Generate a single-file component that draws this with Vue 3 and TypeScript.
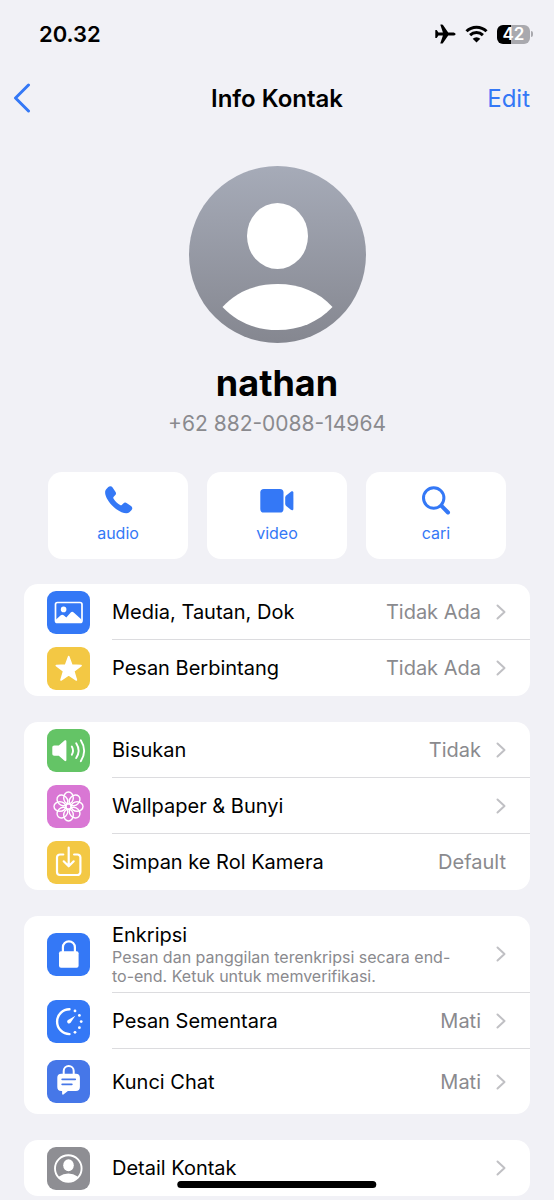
<script setup lang="ts">
type IconName =
  | 'media'
  | 'star'
  | 'speaker'
  | 'flower'
  | 'save'
  | 'lock'
  | 'timer'
  | 'chatlock'
  | 'person'

interface Row {
  icon: IconName
  tone: string
  title: string
  note?: string
  value?: string
  chevron: boolean
  size?: 'tall'
}

interface Action {
  icon: 'audio' | 'video' | 'search'
  label: string
}

const actions: Action[] = [
  { icon: 'audio', label: 'audio' },
  { icon: 'video', label: 'video' },
  { icon: 'search', label: 'cari' },
]

const groups: Row[][] = [
  [
    { icon: 'media', tone: 'blue', title: 'Media, Tautan, Dok', value: 'Tidak Ada', chevron: true },
    { icon: 'star', tone: 'yellow', title: 'Pesan Berbintang', value: 'Tidak Ada', chevron: true },
  ],
  [
    { icon: 'speaker', tone: 'green', title: 'Bisukan', value: 'Tidak', chevron: true },
    { icon: 'flower', tone: 'pink', title: 'Wallpaper & Bunyi', chevron: true },
    { icon: 'save', tone: 'yellow', title: 'Simpan ke Rol Kamera', value: 'Default', chevron: false },
  ],
  [
    {
      icon: 'lock',
      tone: 'blue',
      title: 'Enkripsi',
      note: 'Pesan dan panggilan terenkripsi secara end-to-end. Ketuk untuk memverifikasi.',
      chevron: true,
    },
    { icon: 'timer', tone: 'blue', title: 'Pesan Sementara', value: 'Mati', chevron: true },
    { icon: 'chatlock', tone: 'indigo', title: 'Kunci Chat', value: 'Mati', chevron: true, size: 'tall' },
  ],
  [{ icon: 'person', tone: 'gray', title: 'Detail Kontak', chevron: true }],
]

const petals = [0, 45, 90, 135, 180, 225, 270, 315]
</script>

<template>
  <div class="screen">
    <div class="status">
      <span class="time">20.32</span>
      <div class="indicators">
        <svg class="plane" viewBox="0 0 21 20" aria-hidden="true">
          <path d="M20.6 10c0 1-1.4 1.6-3 1.6h-4.4l-5.2 7.4c-.2.4-.5.6-.9.6H5.800c-.4 0-.5-.3-.4-.7l2.500-7.300H3.400l-1.500 2.100c-.2.3-.4.4-.8.4H.7c-.4 0-.5-.2-.4-.6L.3 10 .3 6.500c-.1-.4 0-.6.4-.6h.4c.4 0 .6.1.8.4l1.500 2.100h4.500L5.400 1.100c-.1-.4 0-.7.4-.7h1.300c.4 0 .7.2.9.6l5.200 7.400h4.400c1.600 0 3 .6 3 1.600z" />
        </svg>
        <svg class="wifi" viewBox="0 0 23 18" aria-hidden="true">
          <path d="M1.500 6.300a14.200 14.200 0 0 1 20 0M5.100 10.200a9.200 9.200 0 0 1 12.800 0" fill="none" stroke="#000" stroke-width="3" />
          <path d="M11.500 17.600 7.700 13.700a5.400 5.400 0 0 1 7.600 0z" />
        </svg>
        <span class="battery"><span class="level">42</span></span>
      </div>
    </div>

    <header class="nav">
      <button class="back" type="button" aria-label="Kembali">
        <svg viewBox="0 0 18 30" aria-hidden="true"><path d="M15.500 2 2.500 15l13 13" /></svg>
      </button>
      <h1>Info Kontak</h1>
      <button class="edit" type="button">Edit</button>
    </header>

    <main>
      <section class="profile">
        <svg class="avatar" viewBox="0 0 177 177" aria-hidden="true">
          <defs>
            <linearGradient id="avatar-fill" x1="0" y1="0" x2="0" y2="1">
              <stop offset="0" stop-color="#a6abb8" />
              <stop offset="1" stop-color="#858790" />
            </linearGradient>
          </defs>
          <circle cx="88.500" cy="88.500" r="88.500" fill="url(#avatar-fill)" />
          <ellipse cx="88.500" cy="70" rx="30.500" ry="33" fill="#fff" />
          <path d="M33.500 141C47 126 66 118 88.500 118s41.500 8 55 23c-14 15-33 23-55 23s-41-8-55-23z" fill="#fff" />
        </svg>
        <h2>nathan</h2>
        <p class="phone">+62 882-0088-14964</p>
      </section>

      <div class="actions">
        <button v-for="action in actions" :key="action.label" type="button" class="action">
          <svg viewBox="0 0 36 30" aria-hidden="true">
            <path
              v-if="action.icon === 'audio'"
              fill="currentColor"
              d="M6.200 4.200 8.300 2.100C9.600.9 11.500 1 12.600 2.500l2.800 4.200c.9 1.300.8 2.500-.3 3.600l-1.400 1.500c-.5.600-.6 1.100-.2 1.800 1.500 2.600 4 5 6.600 6.500.7.400 1.200.3 1.700-.2l1.500-1.400c1.100-1.100 2.300-1.200 3.600-.3l4.100 2.800c1.600 1.100 1.700 3 .4 4.300l-2 2C27 29.500 21.500 28 16 24 10.500 19.700 6.300 14 5.300 9.300 5 7.300 5 5.400 6.200 4.200z"
            />
            <template v-else-if="action.icon === 'video'">
              <rect x="1.300" y="4" width="23.200" height="23.500" rx="3.600" fill="currentColor" />
              <path fill="currentColor" d="M26.200 12.800c0-1 .3-1.700 1-2.400l4.700-3.700c1.200-.9 2.500-.5 2.500 1v16.100c0 1.500-1.300 1.900-2.500 1l-4.700-3.700c-.7-.7-1-1.400-1-2.400z" />
            </template>
            <g v-else fill="none" stroke="currentColor" stroke-linecap="round">
              <circle cx="15.700" cy="13" r="10.200" stroke-width="3" />
              <path d="m23.500 20.800 6.500 6.700" stroke-width="4" />
            </g>
          </svg>
          <span>{{ action.label }}</span>
        </button>
      </div>

      <ul v-for="(group, index) in groups" :key="index" class="card">
        <li v-for="row in group" :key="row.title">
          <button type="button" class="row" :class="row.size">
            <svg class="tile" :class="row.tone" viewBox="0 0 43 43" aria-hidden="true">
              <template v-if="row.icon === 'media'">
                <rect x="8.500" y="11.500" width="26.500" height="20" rx="2" fill="none" stroke="#fff" stroke-width="1.700" />
                <circle cx="16.600" cy="18.400" r="2.800" fill="#fff" />
                <path d="m9 28.500 4.800-4.200c.9-.8 2-.8 2.900 0l2.600 2.300 4.400-5c.9-1 2.100-1 3 0l7.800 6.800v3H9z" fill="#fff" />
              </template>
              <path
                v-else-if="row.icon === 'star'"
                fill="#fff"
                stroke="#fff"
                stroke-width="1.600"
                stroke-linejoin="round"
                d="m21.700 9.500 3.100 8.600 9.300.4-7.300 5.700 2.600 8.800-7.700-5.100-7.700 5.100 2.600-8.800-7.300-5.700 9.300-.4z"
              />
              <template v-else-if="row.icon === 'speaker'">
                <path fill="#fff" d="M7.300 16.500h4.500l5.700-4.900c.9-.8 1.900-.5 1.900.7v18.700c0 1.200-1 1.500-1.900.7L11.800 26.800H7.300c-1.300 0-2-.7-2-2v-6.300c0-1.300.7-2 2-2z" />
                <path d="M24.800 17.600c1.500 2.500 1.500 5.700 0 8.200M29.200 14.300c3 4.600 3 10.200 0 14.800M33.800 11.200c4.200 6.600 4.200 14.400 0 21" fill="none" stroke="#fff" stroke-width="1.900" stroke-linecap="round" />
              </template>
              <g v-else-if="row.icon === 'flower'" fill="none" stroke="#fff" stroke-width="1.400">
                <ellipse
                  v-for="angle in petals"
                  :key="angle"
                  cx="21.500"
                  cy="12.900"
                  rx="4.800"
                  ry="5.900"
                  :transform="`rotate(${angle} 21.5 21.5)`"
                />
                <circle cx="21.500" cy="21.500" r="2.600" />
              </g>
              <path
                v-else-if="row.icon === 'save'"
                fill="none"
                stroke="#fff"
                stroke-width="2.200"
                stroke-linecap="round"
                stroke-linejoin="round"
                d="M16.300 13.500h-3.300a3 3 0 0 0-3 3v14.500a3 3 0 0 0 3 3h17.400a3 3 0 0 0 3-3v-14.500a3 3 0 0 0-3-3h-3.300M21.700 6.500v18.800m-5-5 5 5 5-5"
              />
              <template v-else-if="row.icon === 'lock'">
                <path d="M15.900 19v-4.700a6 6 0 0 1 12 0V19" fill="none" stroke="#fff" stroke-width="2.200" />
                <rect x="12" y="18.200" width="19.600" height="16.600" rx="2" fill="#fff" />
              </template>
              <template v-else-if="row.icon === 'timer'">
                <path d="M22.500 9.300a12.400 12.400 0 0 0 0 24.800" fill="none" stroke="#fff" stroke-width="2.400" stroke-linecap="round" />
                <g fill="#fff">
                  <circle cx="28" cy="10.900" r="1.400" />
                  <circle cx="32.400" cy="15.400" r="1.400" />
                  <circle cx="34.200" cy="21.600" r="1.400" />
                  <circle cx="32.400" cy="27.700" r="1.400" />
                  <circle cx="28" cy="32.300" r="1.400" />
                  <path d="m28.300 15.800-7.300 4.200c-1.200 1-1 2.200-.3 2.900s2 .8 2.900-.2z" />
                </g>
              </template>
              <template v-else-if="row.icon === 'chatlock'">
                <path d="M16.700 14.500v-3.500a5 5 0 0 1 10 0v3.500" fill="none" stroke="#fff" stroke-width="2" />
                <path fill="#fff" d="M14.300 13.800h14.600c2.600 0 4 1.400 4 4v9.200c0 2.600-1.400 4-4 4h-8l-4.500 3.400c-.7.5-1.300.2-1.300-.6V31h-.8c-2.600 0-4-1.400-4-4v-9.200c0-2.600 1.400-4 4-4z" />
                <path d="M15.200 19.300h13M15.200 24.300h9.600" stroke="#4677e8" stroke-width="1.800" stroke-linecap="round" />
              </template>
              <template v-else>
                <clipPath id="person-clip"><circle cx="21.300" cy="21.500" r="13" /></clipPath>
                <circle cx="21.300" cy="21.500" r="13.300" fill="none" stroke="#fff" stroke-width="1.900" />
                <ellipse cx="21.500" cy="18.200" rx="5.300" ry="6" fill="#fff" />
                <ellipse cx="21.300" cy="35.500" rx="12.500" ry="9" fill="#fff" clip-path="url(#person-clip)" />
              </template>
            </svg>
            <span class="body">
              <span class="text" :class="{ noted: row.note }">
                <span class="title">{{ row.title }}</span>
                <span v-if="row.note" class="note">{{ row.note }}</span>
              </span>
              <span v-if="row.value" class="value">{{ row.value }}</span>
              <svg v-if="row.chevron" class="chevron" viewBox="0 0 10 16" aria-hidden="true">
                <path d="m1.500 1.500 7 6.500-7 6.500" />
              </svg>
            </span>
          </button>
        </li>
      </ul>
    </main>

    <div class="home-bar"></div>
  </div>
</template>

<style>
body {
  margin: 0;
  background: #f1f1f6;
}
</style>

<style scoped>
.screen {
  min-height: 100vh;
  box-sizing: border-box;
  padding-bottom: 4px;
  background: #f1f1f6;
  color: #000;
  font-family: Inter, "Liberation Sans", sans-serif;
  font-size: 20px;
}

button {
  margin: 0;
  padding: 0;
  border: 0;
  background: none;
  color: inherit;
  font: inherit;
  text-align: left;
  cursor: pointer;
}

svg {
  display: block;
  flex: none;
}

.status {
  display: flex;
  align-items: center;
  justify-content: space-between;
  height: 72px;
  box-sizing: border-box;
  padding: 0 21px 4px 39px;
}

.time {
  font-size: 22px;
  font-weight: 600;
}

.indicators {
  display: flex;
  align-items: center;
  gap: 9px;
}

.plane {
  width: 21px;
  height: 20px;
}

.wifi {
  width: 23px;
  height: 18px;
}

.battery {
  display: flex;
  align-items: center;
  gap: 1px;
}

.battery::after {
  content: "";
  width: 2px;
  height: 6px;
  border-radius: 0 2px 2px 0;
  background: #a9a9ae;
}

.level {
  width: 33px;
  height: 19px;
  border-radius: 6px;
  background: linear-gradient(90deg, #000 42%, #a9a9ae 42%);
  color: #fff;
  font-size: 17px;
  font-weight: 600;
  line-height: 19px;
  text-align: center;
}

.nav {
  display: grid;
  grid-template-columns: 1fr auto 1fr;
  align-items: center;
  height: 52px;
  padding: 0 24px 0 13px;
}

.nav h1 {
  margin: 0;
  padding-right: 11px;
  padding-left: 22px;
  font-size: 24px;
  font-weight: 600;
}

.back {
  justify-self: start;
  color: #3478f6;
}

.back svg {
  width: 18px;
  height: 30px;
}

.back path {
  fill: none;
  stroke: currentColor;
  stroke-width: 3;
  stroke-linecap: round;
  stroke-linejoin: round;
}

.edit {
  justify-self: end;
  color: #3478f6;
  font-size: 24px;
}

.profile {
  display: flex;
  flex-direction: column;
  align-items: center;
  padding-top: 42px;
}

.avatar {
  width: 177px;
  height: 177px;
}

.profile h2 {
  margin: 18px 0 0;
  font-size: 36px;
  font-weight: 700;
  line-height: 44px;
}

.phone {
  margin: 6px 0 0;
  color: #8a8a8e;
  font-size: 21px;
  line-height: 26px;
}

.actions {
  display: grid;
  grid-template-columns: repeat(3, 1fr);
  gap: 19px;
  margin: 35px 48px 25px;
}

.action {
  display: flex;
  flex-direction: column;
  align-items: center;
  gap: 8px;
  height: 87px;
  box-sizing: border-box;
  padding-top: 13px;
  border-radius: 14px;
  background: #fff;
  color: #3478f6;
  font-size: 16px;
  line-height: 20px;
}

.action svg {
  width: 36px;
  height: 30px;
}

.card {
  margin: 0 24px 26px;
  padding: 0;
  overflow: hidden;
  border-radius: 14px;
  background: #fff;
  list-style: none;
}

.card:last-child {
  margin-bottom: 0;
}

.row {
  display: flex;
  align-items: center;
  gap: 22px;
  width: 100%;
  padding-left: 23px;
}

.tile {
  width: 43px;
  height: 43px;
  border-radius: 9px;
}

.blue {
  background: #3478f6;
}

.yellow {
  background: #f3c844;
}

.green {
  background: #64c466;
}

.pink {
  background: #d977d4;
}

.indigo {
  background: #4677e8;
}

.gray {
  background: #8e8e93;
}

.body {
  display: flex;
  flex: 1;
  align-items: center;
  gap: 15px;
  min-width: 0;
  min-height: 56px;
  box-sizing: border-box;
  padding-right: 24px;
}

.tall .body {
  min-height: 65px;
}

li:not(:last-child) .body {
  border-bottom: 1px solid #dcdcdf;
}

.text {
  display: flex;
  flex: 1;
  flex-direction: column;
}

.noted {
  padding: 7px 16px 6px 0;
}

.title {
  line-height: 24px;
}

.note {
  padding-top: 1px;
  color: #8a8a8e;
  font-size: 16px;
  line-height: 19px;
}

.value {
  color: #8a8a8e;
}

.chevron {
  width: 10px;
  height: 16px;
}

.chevron path {
  fill: none;
  stroke: #c0c0c4;
  stroke-width: 2;
  stroke-linecap: round;
  stroke-linejoin: round;
}

.home-bar {
  position: fixed;
  bottom: 12px;
  left: 50%;
  width: 36%;
  height: 7px;
  border-radius: 4px;
  background: #000;
  transform: translateX(-50%);
}
</style>
